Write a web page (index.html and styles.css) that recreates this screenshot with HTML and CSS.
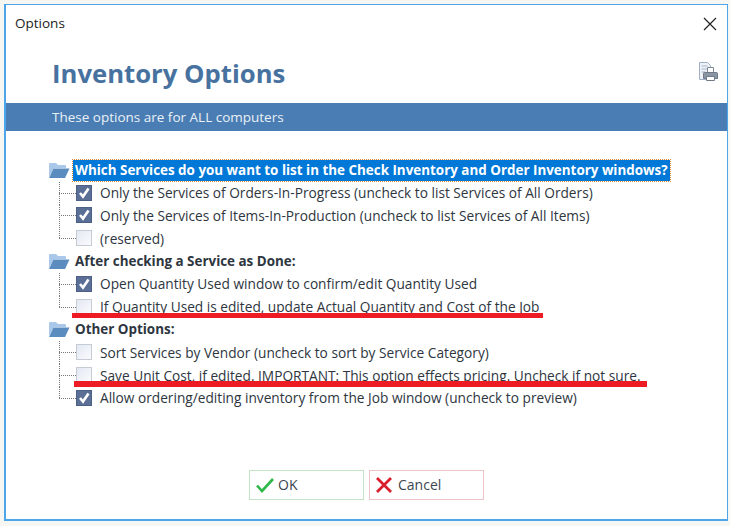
FILE: index.html
```html
<!DOCTYPE html>
<html lang="en">
<head>
<meta charset="utf-8">
<title>Options</title>
<link rel="stylesheet" href="styles.css">
</head>
<body>
<main class="window">
  <div class="titlebar">
    <span class="title">Options</span>
    <svg class="close" width="14" height="14" viewBox="0 0 14 14"><path d="M1 1l12 12M13 1L1 13" stroke="#222" stroke-width="1.2" fill="none"/></svg>
  </div>
  <header class="heading">
    <h1>Inventory Options</h1>
    <svg class="print" width="22" height="22" viewBox="0 0 22 22">
      <path d="M2.500 1.500h8l3 3v14h-11z" fill="#eef2f7" stroke="#9fb0c6"/>
      <path d="M4.500 5h6M4.500 8h6M4.500 11h4" stroke="#a8b6c8"/>
      <path d="M10.500 6.500h6v5h-6z" fill="#fff" stroke="#7d8896"/>
      <path d="M7.500 11.500h12a1 1 0 0 1 1 1v5h-14v-5a1 1 0 0 1 1-1z" fill="#8a96a3" stroke="#6f7a86"/>
      <path d="M9.500 15.500h8v4h-8z" fill="#fff" stroke="#6f7a86"/>
    </svg>
  </header>
  <div class="band">These options are for ALL computers</div>
  <section class="tree">
    <div class="parent"><svg class="folder" width="21" height="17" viewBox="0 0 21 17"><path d="M0 15V2a1 1 0 0 1 1-1h6l2 2h7a1 1 0 0 1 1 1v2H5z" fill="#a9c8ea"/><path d="M0 16l4.500-9.500h16L16 16z" fill="#5b8cc0"/></svg><span class="label selected">Which Services do you want to list in the Check Inventory and Order Inventory windows?</span></div>
    <div class="child"><i class="elbow"></i><span class="box on"><svg width="14" height="14" viewBox="0 0 14 14"><path d="M3 7l3 3.500 5.500-8" stroke="#fff" stroke-width="2.600" fill="none"/></svg></span><span>Only the Services of Orders-In-Progress (uncheck to list Services of All Orders)</span></div>
    <div class="child"><i class="elbow"></i><span class="box on"><svg width="14" height="14" viewBox="0 0 14 14"><path d="M3 7l3 3.500 5.500-8" stroke="#fff" stroke-width="2.600" fill="none"/></svg></span><span>Only the Services of Items-In-Production (uncheck to list Services of All Items)</span></div>
    <div class="child"><i class="elbow last"></i><span class="box"></span><span>(reserved)</span></div>

    <div class="parent"><svg class="folder" width="21" height="17" viewBox="0 0 21 17"><path d="M0 15V2a1 1 0 0 1 1-1h6l2 2h7a1 1 0 0 1 1 1v2H5z" fill="#a9c8ea"/><path d="M0 16l4.500-9.500h16L16 16z" fill="#5b8cc0"/></svg><span class="label">After checking a Service as Done:</span></div>
    <div class="child"><i class="elbow"></i><span class="box on"><svg width="14" height="14" viewBox="0 0 14 14"><path d="M3 7l3 3.500 5.500-8" stroke="#fff" stroke-width="2.600" fill="none"/></svg></span><span>Open Quantity Used window to confirm/edit Quantity Used</span></div>
    <div class="child"><i class="elbow last"></i><span class="box"></span><span>If Quantity Used is edited, update Actual Quantity and Cost of the Job</span><b class="redline one"></b></div>

    <div class="parent"><svg class="folder" width="21" height="17" viewBox="0 0 21 17"><path d="M0 15V2a1 1 0 0 1 1-1h6l2 2h7a1 1 0 0 1 1 1v2H5z" fill="#a9c8ea"/><path d="M0 16l4.500-9.500h16L16 16z" fill="#5b8cc0"/></svg><span class="label">Other Options:</span></div>
    <div class="child"><i class="elbow"></i><span class="box"></span><span>Sort Services by Vendor (uncheck to sort by Service Category)</span></div>
    <div class="child"><i class="elbow"></i><span class="box"></span><span>Save Unit Cost, if edited. IMPORTANT: This option effects pricing. Uncheck if not sure.</span><b class="redline two"></b></div>
    <div class="child"><i class="elbow last"></i><span class="box on"><svg width="14" height="14" viewBox="0 0 14 14"><path d="M3 7l3 3.500 5.500-8" stroke="#fff" stroke-width="2.600" fill="none"/></svg></span><span>Allow ordering/editing inventory from the Job window (uncheck to preview)</span></div>
  </section>
  <footer class="actions">
    <button class="btn ok" type="button"><svg width="20" height="18" viewBox="0 0 20 18"><path d="M2 9.500l5 5.500L18 3" stroke="#2fb84a" stroke-width="2.600" fill="none"/></svg>OK</button>
    <button class="btn cancel" type="button"><svg width="18" height="18" viewBox="0 0 18 18"><path d="M2 2l14 14M16 2L2 16" stroke="#d81e2c" stroke-width="2.800" fill="none"/></svg>Cancel</button>
  </footer>
</main>
</body>
</html>
```
FILE: styles.css
```css
* { box-sizing: border-box; }
html, body { height: 100%; }
body {
  margin: 0;
  padding: 4px 2px 5px 4px;
  background: #f6f7f3;
  font-family: "Open Sans", "Noto Sans", sans-serif;
  font-size: 13.700px;
  color: #2e3640;
}
.window {
  height: 100%;
  display: flex;
  flex-direction: column;
  background: #fff;
  border: 2px solid #4ea6ea;
  border-width: 1px 1px 2px 2px;
}
.titlebar {
  height: 37px;
  padding: 0 10px 2px 9px;
  display: flex;
  align-items: center;
  justify-content: space-between;
}
.close { margin-top: 2px; }
.title { font-size: 13.500px; color: #222; }
.heading {
  height: 61px;
  padding: 12px 8px 0 46px;
  display: flex;
  align-items: flex-start;
  justify-content: space-between;
}
h1 {
  margin: 0;
  font-size: 25.700px;
  line-height: 40px;
  font-weight: 700;
  color: #47729f;
}
.print { margin-top: 7px; }
.band {
  height: 28px;
  padding-left: 46px;
  display: flex;
  align-items: center;
  background: #4a7db3;
  color: #e9f0f7;
  font-size: 13.500px;
}
.tree {
  padding: 28px 0 0 43px;
  flex: 1;
}
.parent, .child {
  height: 22.800px;
  display: flex;
  align-items: center;
}
.child { position: relative; padding-left: 10px; white-space: nowrap; }
.child > span { margin-top: -1px; }
.parent { font-weight: 700; font-size: 13.420px; }
.folder { flex: none; margin-right: 3px; }
.label { padding: 0 2px; line-height: 21px; white-space: nowrap; }
.selected {
  background: #0078d7;
  color: #fff;
  outline: 1px dotted #e08a30;
}
.elbow {
  flex: none;
  width: 17px;
  align-self: stretch;
  background-image:
    repeating-linear-gradient(to bottom, #777 0 1px, transparent 1px 2px),
    repeating-linear-gradient(to right, #777 0 1px, transparent 1px 2px);
  background-repeat: no-repeat;
  background-size: 1px 100%, 100% 1px;
  background-position: left top, left center;
}
.elbow.last {
  align-self: flex-start;
  height: 12px;
  background-position: left top, left bottom;
}
.box {
  flex: none;
  width: 16px;
  height: 16px;
  margin-right: 8px;
  display: flex;
  align-items: center;
  justify-content: center;
  background: linear-gradient(135deg, #e3e8f2, #fafbfd);
  border: 1px solid #c6ccd6;
}
.box.on {
  background: #5b6f96;
  border-color: #4c5f84;
}
.redline {
  position: absolute;
  height: 5.500px;
  background: #ed1c24;
}
.redline.one { left: 23px; width: 471px; top: 17px; }
.redline.two { left: 25px; width: 573px; top: 17px; }
.actions {
  height: 49px;
  padding: 0 0 19px 243px;
  display: flex;
  gap: 5px;
}
.btn {
  width: 115px;
  height: 30px;
  padding: 0 0 2px 5px;
  display: flex;
  align-items: center;
  gap: 3px;
  background: #fff;
  font: inherit;
  font-size: 14px;
  color: #3c4650;
  border: 1px solid;
}
.btn svg { margin-top: 2px; }
.cancel svg { margin-right: 2px; }
.ok { border-color: #c4e3c4; }
.cancel { border-color: #ecc4c8; }
```
